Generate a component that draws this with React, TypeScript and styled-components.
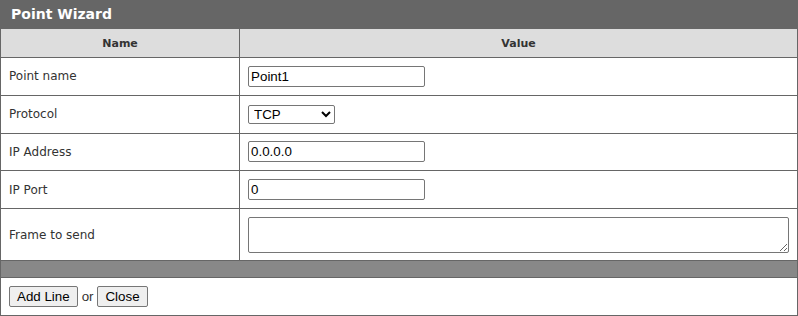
import React, { useState } from 'react';
import styled, { createGlobalStyle } from 'styled-components';

const GlobalStyle = createGlobalStyle`
  html, body {
    margin: 0;
    padding: 0;
    background: #fff;
  }
`;

const StyledWizard = styled.div`
  width: 798px;
  font-family: "DejaVu Sans", Verdana, sans-serif;
  color: #333;
`;

const StyledTitle = styled.div`
  height: 28px;
  padding: 0 11px;
  display: flex;
  align-items: center;
  background-color: #666;
  color: #fff;
  font-size: 14px;
  font-weight: bold;
`;

const StyledTable = styled.table`
  width: 100%;
  border-collapse: collapse;
  border: 1px solid #666;
`;

const StyledHeadCell = styled.th<{ narrow?: boolean }>`
  width: ${props => props.narrow ? '30%' : 'auto'};
  height: 28px;
  padding: 0;
  background-color: #ddd;
  border: 1px solid #666;
  font-size: 11px;
  font-weight: bold;
  color: #333;
  text-align: center;
  vertical-align: middle;
`;

const StyledCell = styled.td`
  height: 37.75px;
  padding: 0 8px;
  border: 1px solid #666;
  font-size: 12px;
  vertical-align: middle;
  box-sizing: border-box;
`;

const StyledTallCell = styled(StyledCell)`
  height: 52px;
`;

const StyledSpacer = styled.td`
  height: 16px;
  padding: 0;
  background-color: #888;
  border: 1px solid #666;
`;

const StyledFooter = styled.td`
  height: 38px;
  padding: 0 8px;
  border: 1px solid #666;
  font-family: "Liberation Sans", Arial, sans-serif;
  font-size: 13.33px;
  color: #333;
  vertical-align: middle;
  box-sizing: border-box;
`;

const fieldFont = `
  font-family: "Liberation Sans", Arial, sans-serif;
  font-size: 13.33px;
  color: #000;
`;

const StyledInput = styled.input`
  ${fieldFont};
  display: block;
  width: 177px;
  height: 21px;
  box-sizing: border-box;
  padding: 1px 2px;
  border: 1px solid #767676;
  border-radius: 2px;
  background: #fff;
`;

const StyledSelect = styled.select`
  ${fieldFont};
  display: block;
  width: 87px;
  height: 19px;
  box-sizing: border-box;
  padding: 0 0 0 1px;
  border: 1px solid #767676;
  border-radius: 2px;
  background: #fff;
`;

const StyledTextArea = styled.textarea`
  ${fieldFont};
  display: block;
  width: 100%;
  height: 36px;
  box-sizing: border-box;
  margin: 0;
  padding: 2px;
  border: 1px solid #767676;
  border-radius: 2px;
  resize: both;
`;

const StyledButton = styled.button`
  ${fieldFont};
  height: 21px;
  padding: 1px 7px;
  border: 1px solid #767676;
  border-radius: 2px;
  background-color: #efefef;
  vertical-align: middle;
  cursor: pointer;

  &:hover {
    background-color: #e5e5e5;
  }
`;

const StyledOr = styled.span`
  margin: 0 4px;
  vertical-align: middle;
`;

export default function App() {
    const [pointName, setPointName] = useState('Point1');
    const [protocol, setProtocol] = useState('TCP');
    const [ip, setIp] = useState('0.0.0.0');
    const [port, setPort] = useState('0');
    const [frame, setFrame] = useState('');

    return (
        <>
            <GlobalStyle/>
            <StyledWizard>
                <StyledTitle>Point Wizard</StyledTitle>
                <StyledTable>
                    <thead>
                        <tr>
                            <StyledHeadCell narrow>Name</StyledHeadCell>
                            <StyledHeadCell>Value</StyledHeadCell>
                        </tr>
                    </thead>
                    <tbody>
                        <tr>
                            <StyledCell>Point name</StyledCell>
                            <StyledCell>
                                <StyledInput value={pointName} onChange={e => setPointName(e.target.value)}/>
                            </StyledCell>
                        </tr>
                        <tr>
                            <StyledCell>Protocol</StyledCell>
                            <StyledCell>
                                <StyledSelect value={protocol} onChange={e => setProtocol(e.target.value)}>
                                    <option>TCP</option>
                                    <option>UDP</option>
                                </StyledSelect>
                            </StyledCell>
                        </tr>
                        <tr>
                            <StyledCell>IP Address</StyledCell>
                            <StyledCell>
                                <StyledInput value={ip} onChange={e => setIp(e.target.value)}/>
                            </StyledCell>
                        </tr>
                        <tr>
                            <StyledCell>IP Port</StyledCell>
                            <StyledCell>
                                <StyledInput value={port} onChange={e => setPort(e.target.value)}/>
                            </StyledCell>
                        </tr>
                        <tr>
                            <StyledTallCell>Frame to send</StyledTallCell>
                            <StyledTallCell>
                                <StyledTextArea value={frame} onChange={e => setFrame(e.target.value)}/>
                            </StyledTallCell>
                        </tr>
                        <tr>
                            <StyledSpacer colSpan={2}/>
                        </tr>
                        <tr>
                            <StyledFooter colSpan={2}>
                                <StyledButton>Add Line</StyledButton>
                                <StyledOr>or</StyledOr>
                                <StyledButton>Close</StyledButton>
                            </StyledFooter>
                        </tr>
                    </tbody>
                </StyledTable>
            </StyledWizard>
        </>
    );
}
